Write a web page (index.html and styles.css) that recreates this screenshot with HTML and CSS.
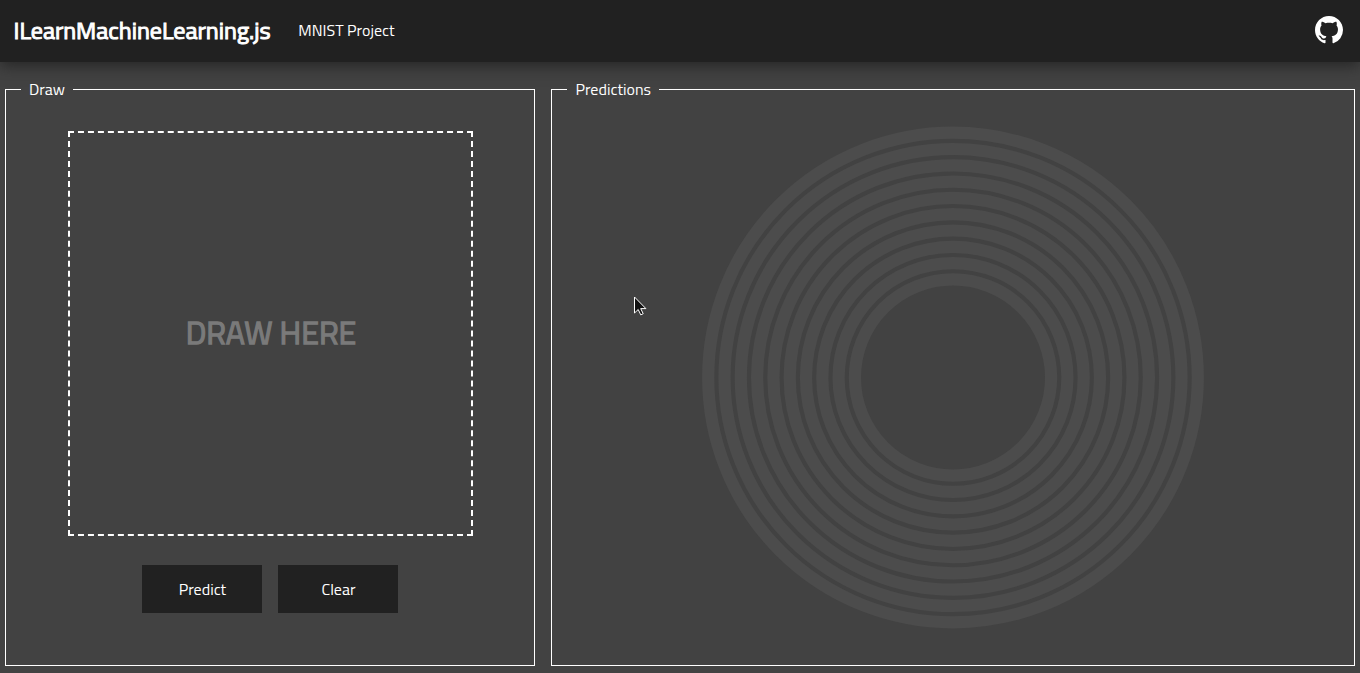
FILE: index.html
```html
<!DOCTYPE html>
<html lang="en">
<head>
<meta charset="utf-8">
<title>ILearnMachineLearning.js</title>
<link rel="stylesheet" href="styles.css">
</head>
<body>
<header class="header">
  <h1 class="brand"><span class="brand-text">ILearnMachineLearning.js</span></h1>
  <span class="project">MNIST Project</span>
  <a class="github" href="#" aria-label="GitHub"><svg viewBox="0 0 16 16" width="28" height="28"><path fill="#fff" d="M8 0C3.58 0 0 3.58 0 8c0 3.54 2.29 6.53 5.47 7.59.4.07.55-.17.55-.38 0-.19-.01-.82-.01-1.49-2.01.37-2.53-.49-2.69-.94-.09-.23-.48-.94-.82-1.13-.28-.15-.68-.52-.01-.53.63-.01 1.08.58 1.23.82.72 1.21 1.87.87 2.33.66.07-.52.28-.87.51-1.07-1.78-.2-3.64-.89-3.64-3.95 0-.87.31-1.59.82-2.15-.08-.2-.36-1.02.08-2.12 0 0 .67-.21 2.2.82.64-.18 1.32-.27 2-.27s1.36.09 2 .27c1.53-1.04 2.2-.82 2.2-.82.44 1.1.16 1.92.08 2.12.51.56.82 1.27.82 2.15 0 3.07-1.87 3.75-3.65 3.95.29.25.54.73.54 1.48 0 1.07-.01 1.93-.01 2.2 0 .21.15.46.55.38A8.01 8.01 0 0 0 16 8c0-4.42-3.58-8-8-8z"/></svg></a>
</header>
<main class="main">
  <fieldset class="panel panel-draw">
    <legend class="legend"><span class="legend-draw">Draw</span></legend>
    <div class="canvas"><span class="hint">DRAW HERE</span></div>
    <div class="buttons">
      <button class="button predict">Predict</button>
      <button class="button clear">Clear</button>
    </div>
  </fieldset>
  <fieldset class="panel panel-predictions">
    <legend class="legend"><span class="legend-predictions">Predictions</span></legend>
    <svg class="rings" viewBox="-251 -251.5 502 503" width="502" height="503">
      <circle r="244.8"/><circle r="228.5"/><circle r="212.2"/><circle r="195.9"/><circle r="179.6"/>
      <circle r="163.3"/><circle r="147"/><circle r="130.7"/><circle r="114.4"/><circle r="98.1"/>
    </svg>
  </fieldset>
</main>
<svg class="cursor" viewBox="0 0 13 21" width="13" height="21"><path d="M.5 1v16l3.7-3.5 2.6 5.4 2.4-1.2-2.5-5.1h5.2z" fill="#111" stroke="#fff"/></svg>
</body>
</html>
```
FILE: styles.css
```css
* { box-sizing: border-box; }
body {
  margin: 0;
  height: 673px;
  overflow: hidden;
  display: flex;
  flex-direction: column;
  background: #424242;
  color: #fff;
  font: 16px/24px "Titillium Web", Roboto, "Open Sans", sans-serif;
}
.header {
  height: 62px;
  flex: none;
  display: flex;
  align-items: center;
  padding: 0 17px 2px 13px;
  background: #212121;
  box-shadow: 0 4px 14px rgba(33, 33, 33, 0.85);
}
.brand {
  margin: 0;
  width: 285.3px;
  padding-left: 0.5px;
  font-size: 24px;
  font-weight: 400;
  -webkit-text-stroke: 1px #fff;
  white-space: nowrap;
}
.project { white-space: nowrap; }
.github { margin-left: auto; display: flex; }
.main {
  flex: 1;
  display: flex;
  gap: 16px;
  padding: 15px 5px 7px;
}
.panel {
  margin: 0;
  min-width: 0;
  border: 1px solid #fff;
  padding: 0 15px;
}
.panel-draw { width: 530px; flex: none; }
.panel-predictions { flex: 1; }
.legend { padding: 0 8px; height: 24px; white-space: nowrap; }
.legend-predictions { margin: 0 -0.5px 0 0.5px; }
.canvas {
  width: 405px;
  height: 405px;
  margin: 30px auto 0;
  border: 2px dashed #fff;
  display: flex;
  align-items: center;
  justify-content: center;
}
.hint {
  color: #7a7a7a;
  font-size: 32px;
  font-weight: 400;
  -webkit-text-stroke: 1.3px #7a7a7a;
  line-height: 40px;
  white-space: nowrap;
  padding: 0 0 4px 2px;
}
.buttons { display: flex; gap: 16px; justify-content: center; margin-top: 29px; }
.button {
  width: 120px;
  height: 48px;
  padding: 0 0 0 1px;
  border: 0;
  background: #212121;
  color: #fff;
  font: inherit;
}
.rings { display: block; margin: 25px auto 0; }
.rings circle { fill: none; stroke: #4c4c4c; stroke-width: 12.2px; }
.cursor { position: absolute; left: 634px; top: 296px; }
```
